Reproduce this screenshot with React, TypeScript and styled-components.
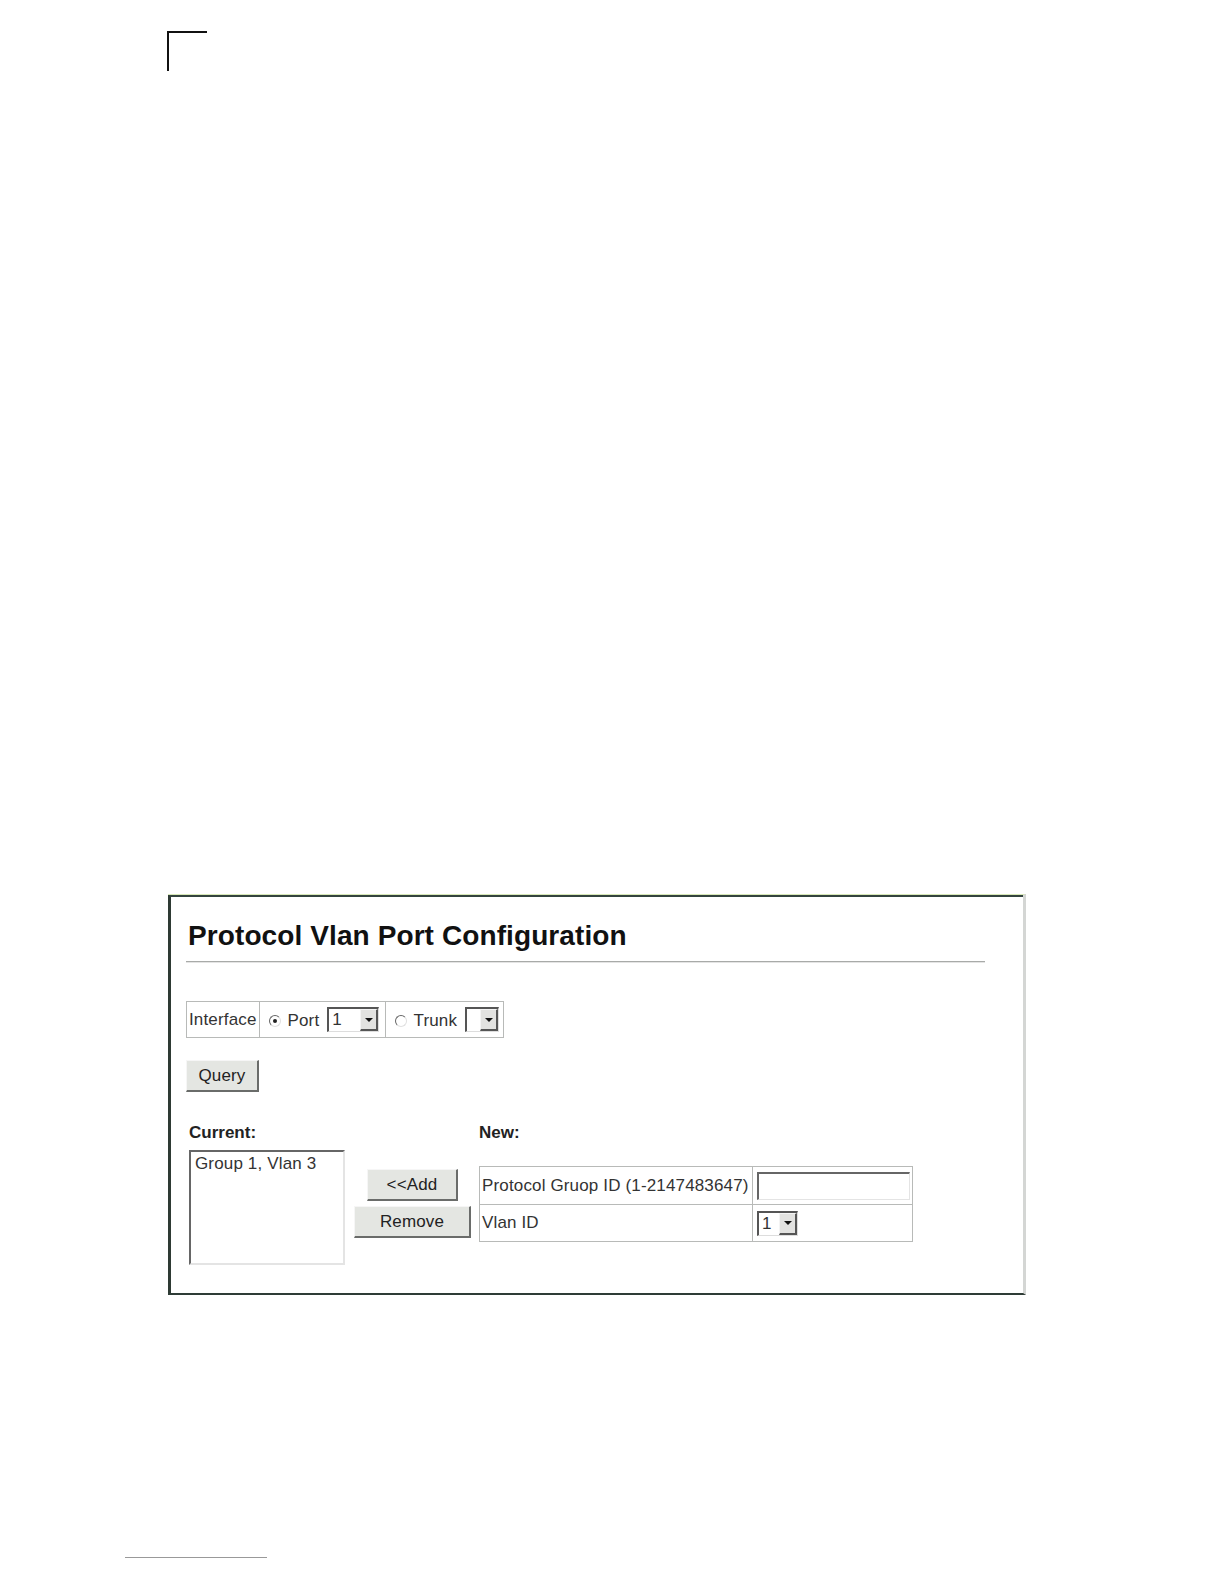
import React from "react";
import styled, { createGlobalStyle } from "styled-components";

const Global = createGlobalStyle`
  html, body { margin: 0; padding: 0; background: #fff; }
  body { font-family: "Liberation Sans", Arial, sans-serif; color: #111; }
`;

const Page = styled.div`
  width: 1224px;
  height: 1584px;
  position: relative;
  box-sizing: border-box;
  padding-top: 31px;
  display: flex;
  flex-direction: column;
`;

const CornerMark = styled.div`
  margin-left: 167px;
  width: 40px;
  height: 40px;
  border-top: 2px solid #111;
  border-left: 2px solid #111;
  box-sizing: border-box;
`;

const Panel = styled.div`
  margin-top: 823px;
  margin-left: 168px;
  width: 858px;
  height: 401px;
  box-sizing: border-box;
  border-top: 1px solid #d8e8b8;
  border-bottom: 2px solid #2e3c36;
  border-right: 3px solid #d4d6d4;
  background: #fff;
  display: flex;
  flex-direction: column;
`;

const PanelInner = styled.div`
  flex: 1;
  border-top: 2px solid #34443e;
  border-left: 3px solid #2e3a34;
  padding: 0 38px 0 15px;
  display: flex;
  flex-direction: column;
`;

const Title = styled.h1`
  margin: 22px 0 0 2px;
  font-family: "Liberation Sans", Arial, sans-serif;
  font-weight: bold;
  font-size: 28px;
  line-height: 33px;
  color: #111;
  letter-spacing: 0.1px;
`;

const Rule = styled.div`
  margin-top: 9px;
  height: 0;
  border-top: 1px solid #a8aaa8;
  border-bottom: 1px solid #e4e4e4;
`;

const Grid = styled.table`
  border-collapse: collapse;
  border: 1px solid #b8bab8;
  font-size: 17px;
  letter-spacing: 0.15px;
  color: #333;
  font-family: "Liberation Sans", Arial, sans-serif;
`;

const Cell = styled.td<{ $w?: number; $h?: number }>`
  border: 1px solid #b8bab8;
  padding: 0 2px;
  height: ${(p) => (p.$h ? p.$h : 34)}px;
  width: ${(p) => (p.$w ? `${p.$w}px` : "auto")};
  box-sizing: border-box;
  white-space: nowrap;
  vertical-align: middle;
`;

const InterfaceGrid = styled(Grid)`
  margin-top: 38px;
`;

const CellContent = styled.div`
  display: flex;
  align-items: center;
  gap: 4px;
`;

const Radio = styled.span<{ $on?: boolean }>`
  width: 12px;
  height: 12px;
  box-sizing: border-box;
  border-radius: 50%;
  border: 1px solid #666;
  border-right-color: #e0e0e0;
  border-bottom-color: #e0e0e0;
  position: relative;
  display: inline-block;
  margin: 2px 3px 0 7px;
  &::after {
    content: "";
    position: absolute;
    left: 3px;
    top: 3px;
    width: 4px;
    height: 4px;
    border-radius: 50%;
    background: ${(p) => (p.$on ? "#222" : "transparent")};
  }
`;

const Label = styled.span`
  font-size: 17px;
  color: #333;
  margin-top: 3px;
`;

const SelectBox = styled.div<{ $w: number }>`
  width: ${(p) => p.$w}px;
  height: 25px;
  box-sizing: border-box;
  border-top: 2px solid #555;
  border-left: 2px solid #555;
  border-right: 1px solid #ddd;
  border-bottom: 1px solid #ddd;
  display: flex;
  align-items: stretch;
  justify-content: space-between;
  background: #fff;
  margin-left: 4px;
`;

const SelectValue = styled.span`
  font-size: 17px;
  color: #333;
  padding-left: 3px;
  line-height: 22px;
`;

const Arrow = styled.span`
  width: 18px;
  background: #e2e2e0;
  border-left: 1px solid #f4f4f4;
  border-top: 1px solid #f4f4f4;
  border-right: 2px solid #555;
  border-bottom: 2px solid #555;
  box-sizing: border-box;
  display: flex;
  align-items: center;
  justify-content: center;
  &::after {
    content: "";
    border-left: 4px solid transparent;
    border-right: 4px solid transparent;
    border-top: 4px solid #111;
  }
`;

const Button = styled.button<{ $w: number }>`
  width: ${(p) => p.$w}px;
  height: 32px;
  box-sizing: border-box;
  background: #e4e6e2;
  border: none;
  border-top: 1px solid #f6f6f6;
  border-left: 1px solid #f6f6f6;
  border-right: 2px solid #6a6c6a;
  border-bottom: 2px solid #6a6c6a;
  font-family: "Liberation Sans", Arial, sans-serif;
  font-size: 17px;
  letter-spacing: 0.15px;
  color: #222;
  padding: 0;
`;

const QueryRow = styled.div`
  margin-top: 22px;
`;

const Lower = styled.div`
  margin-top: 31px;
  display: flex;
  align-items: flex-start;
`;

const Column = styled.div<{ $indent?: number }>`
  display: flex;
  flex-direction: column;
  margin-left: ${(p) => p.$indent ?? 0}px;
`;

const Heading = styled.div`
  font-weight: bold;
  font-size: 17px;
  color: #222;
  line-height: 20px;
`;

const ListBox = styled.div`
  margin-top: 7px;
  width: 156px;
  height: 115px;
  box-sizing: border-box;
  border-top: 2px solid #666;
  border-left: 2px solid #666;
  border-right: 2px solid #e4e4e4;
  border-bottom: 2px solid #e4e4e4;
  padding: 1px 4px;
  font-size: 17px;
  letter-spacing: 0.15px;
  color: #333;
  line-height: 22px;
`;

const ButtonStack = styled.div`
  margin-top: 46px;
  margin-left: 9px;
  display: flex;
  flex-direction: column;
  align-items: center;
  gap: 5px;
`;

const NewGrid = styled(Grid)`
  margin-top: 23px;
`;

const TextInput = styled.div`
  width: 153px;
  height: 28px;
  box-sizing: border-box;
  border-top: 2px solid #666;
  border-left: 2px solid #666;
  border-right: 1px solid #e4e4e4;
  border-bottom: 1px solid #e4e4e4;
  margin-left: 2px;
`;

const VlanSelect = styled(SelectBox)`
  margin-left: 2px;
`;

const FootLine = styled.div`
  position: absolute;
  left: 125px;
  top: 1557px;
  width: 142px;
  height: 0;
  border-top: 1px solid #999;
`;

export default function App() {
  return (
    <>
      <Global />
      <Page>
        <CornerMark />
        <Panel>
          <PanelInner>
            <Title>Protocol Vlan Port Configuration</Title>
            <Rule />
            <div>
              <InterfaceGrid>
                <tbody>
                  <tr>
                    <Cell $h={36}>Interface</Cell>
                    <Cell $w={126}>
                      <CellContent>
                        <Radio $on />
                        <Label>Port</Label>
                        <SelectBox $w={52}>
                          <SelectValue>1</SelectValue>
                          <Arrow />
                        </SelectBox>
                      </CellContent>
                    </Cell>
                    <Cell $w={118}>
                      <CellContent>
                        <Radio />
                        <Label>Trunk</Label>
                        <SelectBox $w={34}>
                          <SelectValue />
                          <Arrow />
                        </SelectBox>
                      </CellContent>
                    </Cell>
                  </tr>
                </tbody>
              </InterfaceGrid>
            </div>
            <QueryRow>
              <Button $w={73}>Query</Button>
            </QueryRow>
            <Lower>
              <Column $indent={3}>
                <Heading>Current:</Heading>
                <ListBox>Group 1, Vlan 3</ListBox>
              </Column>
              <ButtonStack>
                <Button $w={91}>&lt;&lt;Add</Button>
                <Button $w={117}>Remove</Button>
              </ButtonStack>
              <Column $indent={8}>
                <Heading>New:</Heading>
                <NewGrid>
                  <tbody>
                    <tr>
                      <Cell $w={273} $h={38}>Protocol Gruop ID (1-2147483647)</Cell>
                      <Cell $w={160} $h={38}>
                        <TextInput />
                      </Cell>
                    </tr>
                    <tr>
                      <Cell $h={37}>Vlan ID</Cell>
                      <Cell>
                        <VlanSelect $w={41}>
                          <SelectValue>1</SelectValue>
                          <Arrow />
                        </VlanSelect>
                      </Cell>
                    </tr>
                  </tbody>
                </NewGrid>
              </Column>
            </Lower>
          </PanelInner>
        </Panel>
        <FootLine />
      </Page>
    </>
  );
}
